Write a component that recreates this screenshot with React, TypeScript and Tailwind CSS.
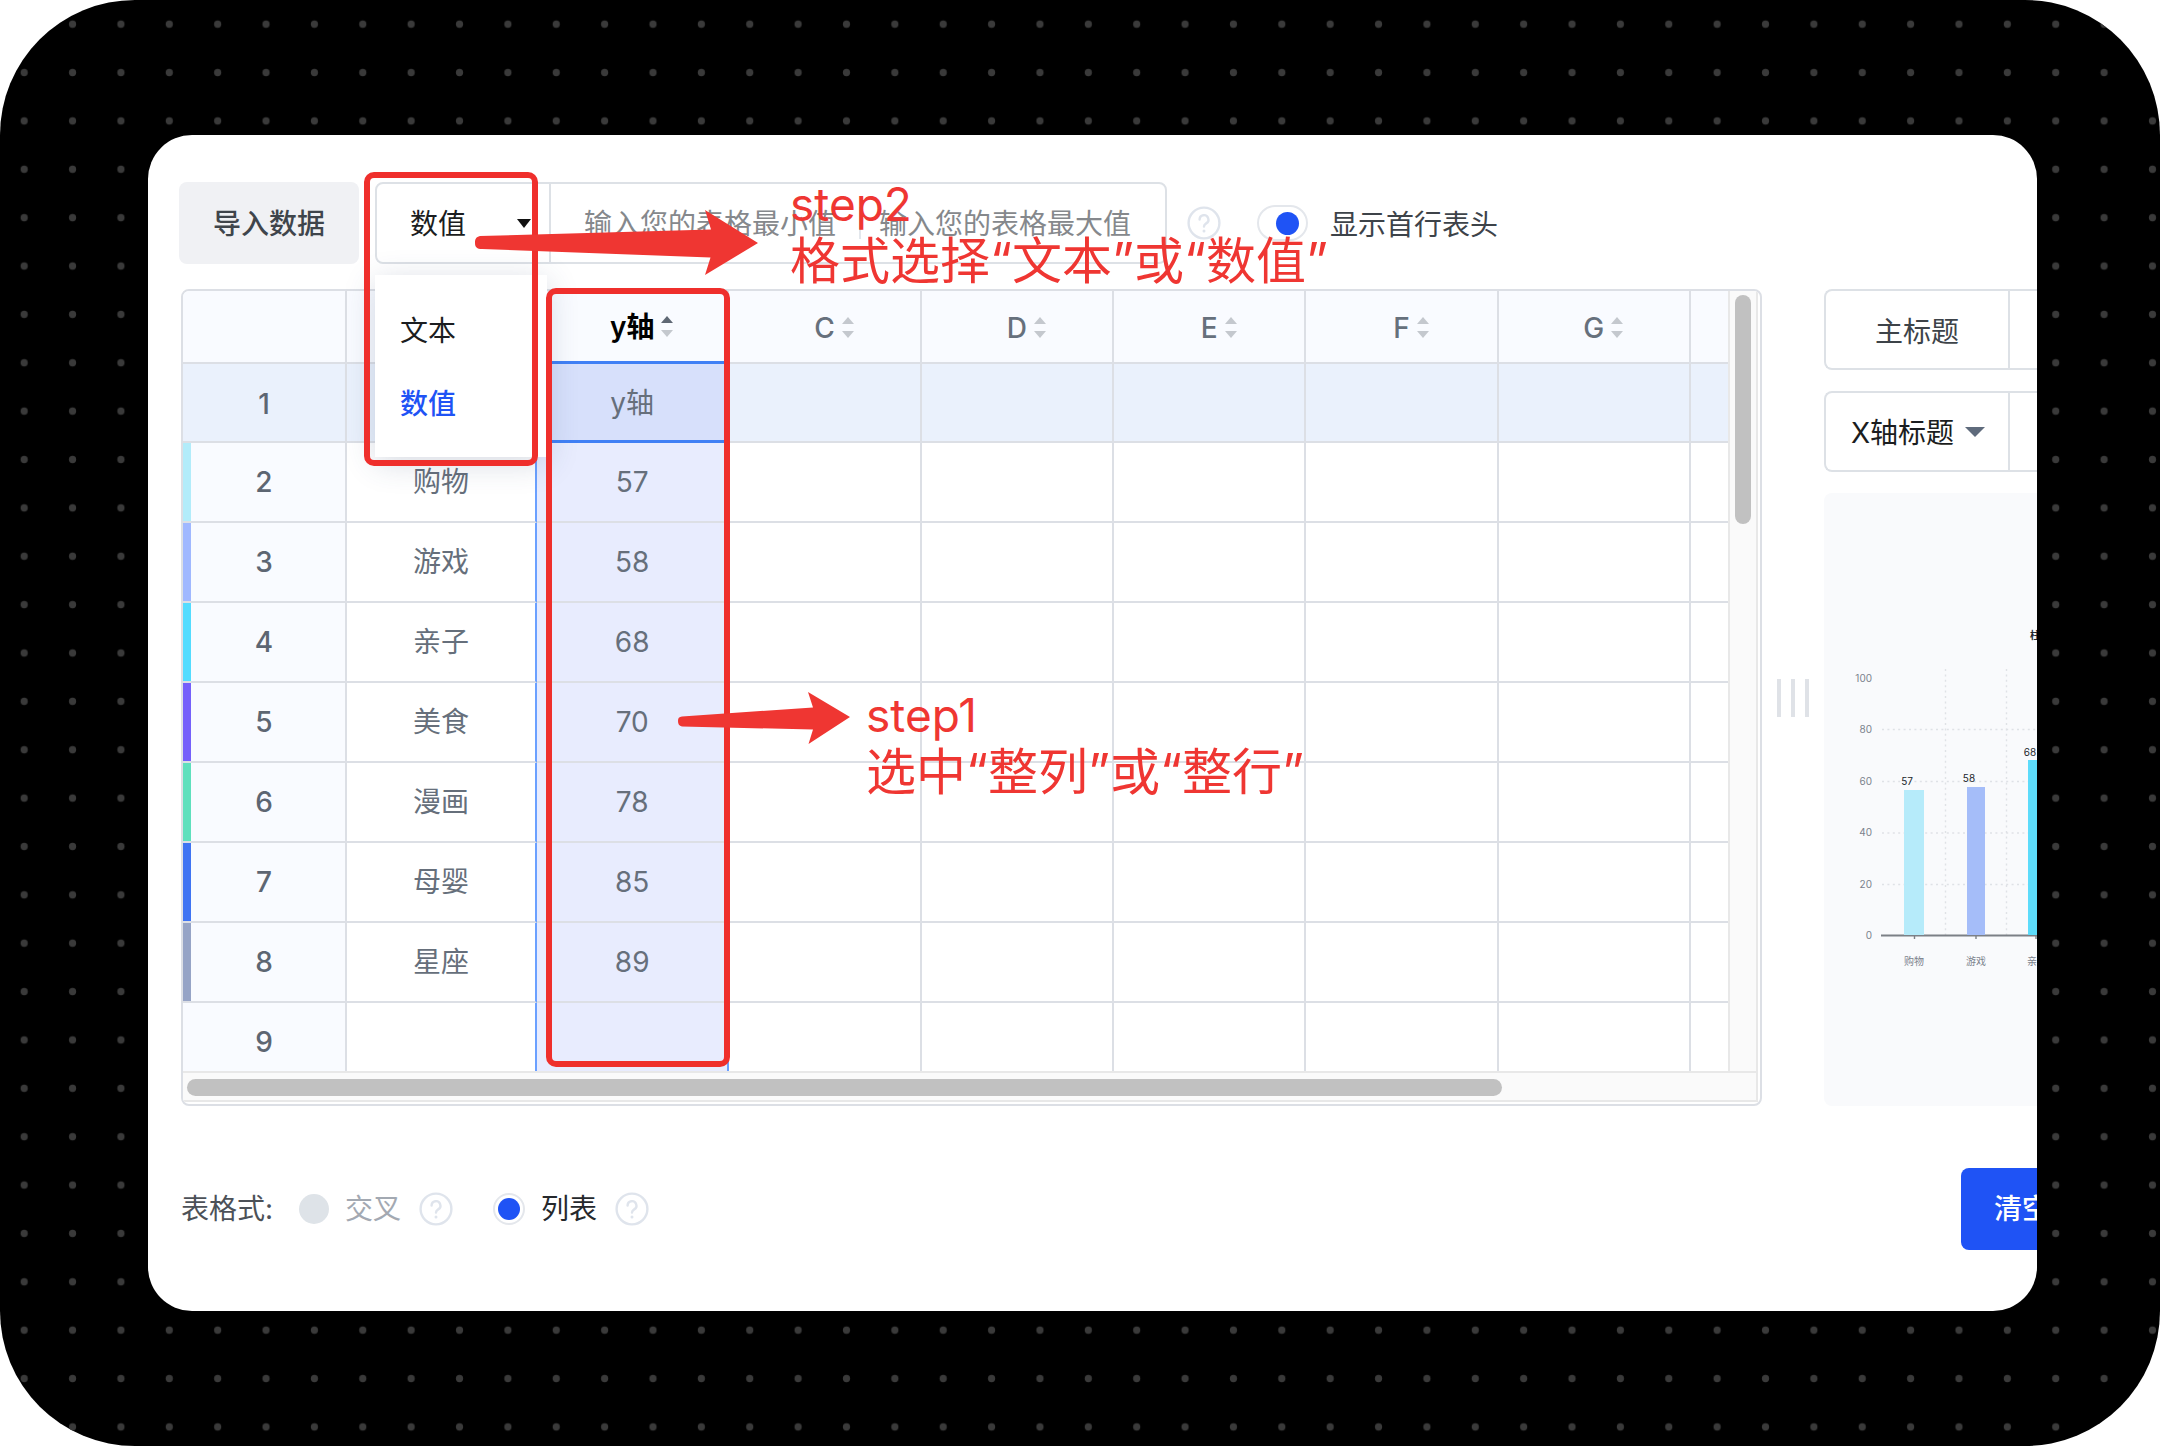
import React, { FC, ReactNode } from "react";
import clsx from "clsx";

const COLUMNS = ["C", "D", "E", "F", "G"];

const ROWS = [
  { id: 2, name: "购物", value: "57", strip: "bg-[#b2ecfa]" },
  { id: 3, name: "游戏", value: "58", strip: "bg-[#a0b8ff]" },
  { id: 4, name: "亲子", value: "68", strip: "bg-[#53dcff]" },
  { id: 5, name: "美食", value: "70", strip: "bg-[#7560fb]" },
  { id: 6, name: "漫画", value: "78", strip: "bg-[#5fe0bd]" },
  { id: 7, name: "母婴", value: "85", strip: "bg-[#3f74f3]" },
  { id: 8, name: "星座", value: "89", strip: "bg-[#96a4c6]" },
  { id: 9, name: "", value: "", strip: "" },
];

const DotGrid: FC = () => (
  <svg className="absolute inset-0 h-full w-full" aria-hidden="true">
    <defs>
      <pattern id="dots" width="48.37" height="48.37" patternUnits="userSpaceOnUse">
        <circle cx="24.2" cy="24.2" r="3.6" fill="#3a3a3a" />
      </pattern>
    </defs>
    <rect width="100%" height="100%" fill="url(#dots)" />
  </svg>
);

const HelpIcon: FC = () => (
  <svg className="h-[34px] w-[34px] shrink-0" viewBox="0 0 34 34" fill="none" stroke="#dfe4ec" strokeWidth="2.4" aria-hidden="true">
    <circle cx="17" cy="17" r="15.4" />
    <path d="M12.6 13.6a4.4 4.4 0 1 1 6.6 3.8c-1.5.9-2.2 1.6-2.2 3.2" strokeLinecap="round" />
    <circle cx="17" cy="25" r="1.5" fill="#dfe4ec" stroke="none" />
  </svg>
);

const SortIcon: FC<{ active?: boolean }> = ({ active }) => (
  <svg className="absolute left-full top-1/2 ml-[7px] h-6 w-3 -translate-y-1/2" viewBox="0 0 12 24" aria-hidden="true">
    <path d="M6 1l6 7H0z" fill={active ? "#5f6874" : "#c4c8ce"} />
    <path d="M6 22l6-7H0z" fill="#c4c8ce" />
  </svg>
);

const ColumnHead: FC<{ children: ReactNode; selected?: boolean }> = ({ children, selected }) => (
  <th
    scope="col"
    className={clsx(
      "border-r-2 border-[#dcdfe5] bg-[#f9fbff] p-0 pt-[2px] text-center",
      selected ? "border-b-[3px] border-b-[#4080f5] font-semibold text-black" : "border-b-2 font-medium text-[#66707c]"
    )}
  >
    <span className="relative inline-block">
      {children}
      <SortIcon active={selected} />
    </span>
  </th>
);

const EmptyCells: FC<{ className?: string }> = ({ className }) => (
  <>
    {COLUMNS.map((c) => (
      <td key={c} className={clsx("border-b-2 border-r-2 border-[#dcdfe5]", className)} />
    ))}
    <td className={clsx("border-b-2 border-[#dcdfe5]", className)} />
  </>
);

const Toolbar: FC = () => (
  <div className="flex items-center pl-[31px]">
    <button type="button" className="h-[82px] w-[180px] shrink-0 rounded-lg bg-[#f0f1f4] pt-[2px] font-medium text-[#3f454b]">
      导入数据
    </button>
    <div className="relative ml-4 flex h-[82px] w-[792px] shrink-0 rounded-lg border-2 border-[#dde1e6]">
      <div className="relative w-[174px] shrink-0 border-r-2 border-[#dde1e6]">
        <select aria-label="格式" defaultValue="数值" className="h-full w-full appearance-none bg-transparent pl-[33px] pt-[2px] text-[#1b1d20] outline-none">
          <option>文本</option>
          <option>数值</option>
        </select>
        <svg className="pointer-events-none absolute right-[18px] top-1/2 h-[10px] w-[14px] -translate-y-1/2" viewBox="0 0 14 10" aria-hidden="true">
          <path d="M0 1h14L7 10z" fill="#111" />
        </svg>
      </div>
      <input
        aria-label="最小值"
        placeholder="输入您的表格最小值"
        className="w-[308px] shrink-0 bg-transparent pl-[33px] pt-[2px] outline-none placeholder:text-[#85888c]"
      />
      <div className="h-8 w-[2px] shrink-0 self-center bg-[#e3e7ec]" />
      <input
        aria-label="最大值"
        placeholder="输入您的表格最大值"
        className="w-0 flex-1 bg-transparent pl-[18px] pt-[2px] outline-none placeholder:text-[#85888c]"
      />
      <ul className="absolute -left-[2px] top-[91px] z-10 w-[172px] bg-white py-[18px] shadow-[0_6px_30px_rgba(50,70,110,0.2)]">
        <li>
          <button type="button" className="h-[73px] w-full pl-[25px] pt-[2px] text-left text-[#1b1d20]">文本</button>
        </li>
        <li>
          <button type="button" className="h-[73px] w-full pl-[25px] pt-[2px] text-left font-medium text-[#1f53f5]">数值</button>
        </li>
      </ul>
    </div>
    <div className="ml-5">
      <HelpIcon />
    </div>
    <label className="ml-9 flex items-center gap-[22px] text-[#3d4349]">
      <input
        type="checkbox"
        defaultChecked
        className="flex h-9 w-[51px] appearance-none items-center justify-end rounded-full border-2 border-[#e4e7ec] pr-[7px] before:block before:h-[23px] before:w-[23px] before:rounded-full before:bg-[#1f53f5] before:content-['']"
      />
      <span className="pt-1">显示首行表头</span>
    </label>
  </div>
);

const DataTable: FC = () => (
  <div className="min-w-0 flex-1 overflow-hidden rounded-lg border-2 border-[#dcdfe5] pb-[2px] pr-[2px]">
    <div className="flex">
      <div className="h-[780px] min-w-0 flex-1 overflow-hidden">
        <table className="w-full table-fixed border-separate border-spacing-0">
          <colgroup>
            <col className="w-[164px]" />
            <col className="w-[190px]" />
            <col />
            {COLUMNS.map((c) => (
              <col key={c} />
            ))}
            <col className="w-[37px]" />
          </colgroup>
          <thead>
            <tr className="h-[73px]">
              <td className="border-b-2 border-r-2 border-[#dcdfe5] bg-[#f9fbff]" />
              <td className="border-b-2 border-r-2 border-[#dcdfe5] bg-[#f9fbff]" />
              <ColumnHead selected>y轴</ColumnHead>
              {COLUMNS.map((c) => (
                <ColumnHead key={c}>{c}</ColumnHead>
              ))}
              <td className="border-b-2 border-[#dcdfe5] bg-[#f9fbff]" />
            </tr>
          </thead>
          <tbody className="text-center text-[#666f7b]">
            <tr className="h-[79px]">
              <th scope="row" className="border-b-2 border-r-2 border-[#dcdfe5] bg-[#eaf1fc] p-0 pt-[2px] font-medium text-[#5d6672]">1</th>
              <td className="border-b-2 border-r-2 border-[#dcdfe5] bg-[#eaf1fc]" />
              <td className="border-b-[3px] border-r-2 border-b-[#4080f5] border-r-[#6aa0ff] bg-[#d7e0fb] pt-[2px]">y轴</td>
              <EmptyCells className="bg-[#eaf1fc]" />
            </tr>
            {ROWS.map((row) => (
              <tr key={row.id} className="h-20">
                <th scope="row" className="relative border-b-2 border-r-2 border-[#dcdfe5] bg-[#f9fbff] p-0 font-medium text-[#5d6672]">
                  {row.strip && <span className={clsx("absolute inset-y-0 left-0 w-2", row.strip)} />}
                  {row.id}
                </th>
                <td className="border-b-2 border-r-2 border-b-[#dcdfe5] border-r-[#6aa0ff]">{row.name}</td>
                <td className="border-b-2 border-r-2 border-b-[#dcdfe5] border-r-[#6aa0ff] bg-[#e8ecfe]">{row.value}</td>
                <EmptyCells />
              </tr>
            ))}
          </tbody>
        </table>
      </div>
      <div className="flex w-[30px] flex-col items-center border-x-2 border-[#e8e8e8] bg-[#fafafa] pt-1">
        <div className="h-[229px] w-4 rounded-full bg-[#c1c1c1]" />
      </div>
    </div>
    <div className="border-y-2 border-r-2 border-[#e8e8e8] bg-[#fafafa] px-1 pb-1 pt-[6px]">
      <div className="h-[17px] w-[84%] rounded-full bg-[#c1c1c1]" />
    </div>
  </div>
);

const ChartPreview: FC = () => (
  <svg className="block h-[613px] w-full" viewBox="0 0 213 613" preserveAspectRatio="xMinYMin slice" fontSize="10" aria-label="柱状图">
    <g stroke="#dfe2e6" strokeWidth="1.4" strokeDasharray="2 3.4">
      <path d="M121.5 176v266M182.5 176v266" />
      <path d="M58 236.500h155M58 288.500h155M58 340h155M58 391.500h155" />
    </g>
    <path d="M57 442.500h156" stroke="#7c8086" strokeWidth="1.8" />
    <path d="M90.500 443v3M152 443v3M212 443v3" stroke="#7c8086" strokeWidth="1.4" />
    <rect x="80" y="297" width="20" height="145" fill="#b6ebfa" />
    <rect x="143" y="294" width="18" height="148" fill="#a5bdf9" />
    <rect x="204" y="267" width="18" height="175" fill="#5ddcfb" />
    <g fill="#7b828c" textAnchor="end">
      <text x="48" y="189">100</text>
      <text x="48" y="240">80</text>
      <text x="48" y="292">60</text>
      <text x="48" y="343">40</text>
      <text x="48" y="395">20</text>
      <text x="48" y="446">0</text>
    </g>
    <g fill="#22262b" textAnchor="middle">
      <text x="83" y="292">57</text>
      <text x="145" y="289">58</text>
      <text x="206" y="263">68</text>
    </g>
    <g fill="#7b828c" textAnchor="middle">
      <text x="90" y="472">购物</text>
      <text x="152" y="472">游戏</text>
      <text x="213" y="472">亲子</text>
    </g>
    <text x="206" y="146" fontWeight="700" fill="#22262b">柱</text>
  </svg>
);

const SidePanel: FC = () => (
  <div className="w-[213px] shrink-0">
    <div className="flex h-[81px] rounded-l-lg border-y-2 border-l-2 border-[#dde1e6]">
      <label htmlFor="main-title" className="flex w-[184px] shrink-0 items-center justify-center border-r-2 border-[#dde1e6] pt-1 text-[#3d4349]">
        主标题
      </label>
      <input id="main-title" className="w-0 flex-1 outline-none" />
    </div>
    <div className="mt-[21px] flex h-[81px] rounded-l-lg border-y-2 border-l-2 border-[#dde1e6]">
      <div className="relative w-[184px] shrink-0 border-r-2 border-[#dde1e6]">
        <select aria-label="轴标题" className="h-full w-full appearance-none bg-transparent pl-[25px] pt-[2px] text-[#1b1d20] outline-none">
          <option>X轴标题</option>
        </select>
        <svg className="pointer-events-none absolute right-[23px] top-1/2 h-[10px] w-5 -translate-y-1/2" viewBox="0 0 20 10" aria-hidden="true">
          <path d="M0 0h20L10 10z" fill="#5f6b7c" />
        </svg>
      </div>
      <input aria-label="X轴标题" className="w-0 flex-1 outline-none" />
    </div>
    <div className="mt-[21px] overflow-hidden rounded-l-lg bg-[#f9fafc]">
      <ChartPreview />
    </div>
  </div>
);

const Footer: FC = () => (
  <div className="flex h-[82px] items-center pl-[33px]">
    <span className="text-[#4c5158]">表格式:</span>
    <label className="ml-[26px] flex items-center gap-4 text-[#a3a9b2]">
      <input type="radio" name="layout" disabled className="h-[30px] w-[30px] appearance-none rounded-full bg-[#dee3e8]" />
      交叉
    </label>
    <div className="ml-[18px]">
      <HelpIcon />
    </div>
    <label className="ml-10 flex items-center gap-4 text-[#25282c]">
      <input
        type="radio"
        name="layout"
        defaultChecked
        className="flex h-8 w-8 appearance-none items-center justify-center rounded-full border-2 border-[#e4e7ec] before:block before:h-[22px] before:w-[22px] before:rounded-full before:bg-[#1f53f5] before:content-['']"
      />
      列表
    </label>
    <div className="ml-[18px]">
      <HelpIcon />
    </div>
    <button type="button" className="ml-auto h-full w-[76px] overflow-hidden whitespace-nowrap rounded-l-lg bg-[#1f53f5] pl-[33px] text-left font-medium text-white">
      清空
    </button>
  </div>
);

// red call-outs drawn over the editor
const Annotations: FC = () => (
  <div className="pointer-events-none absolute inset-0 z-20 text-[50px] leading-[57px] text-[#ef3632]">
    <div className="absolute left-[216px] top-[37px] h-[294px] w-[174px] rounded-[10px] border-[6px] border-[#ef2f2c]" />
    <div className="absolute left-[398px] top-[153px] h-[779px] w-[184px] rounded-[10px] border-[6px] border-[#ef2f2c]" />
    <svg className="absolute left-[327px] top-[74px] h-[68px] w-[284px]" viewBox="0 0 284 68" fill="#ef3632" aria-hidden="true">
      <path d="M0 34C0 30 1 28 5 27L236 20.500L230 1L283 34L230 66L235.500 48.500L7 40C2 40 0 38 0 34z" />
    </svg>
    <svg className="absolute left-[529px] top-[556px] h-[56px] w-[174px]" viewBox="0 0 174 56" fill="#ef3632" aria-hidden="true">
      <path d="M1 30C1 27 2 26 5 25.500L136 16.500L131 1L173 26L131.500 53L136 38.500L5 35.500C2 35 1 33 1 30z" />
    </svg>
    <div className="absolute left-[642px] top-[41px] whitespace-nowrap">
      <p className="text-[46px] leading-[57px]">step2</p>
      <p>格式选择“文本”或“数值”</p>
    </div>
    <div className="absolute left-[718px] top-[552px] whitespace-nowrap">
      <p className="text-[46px] leading-[57px]">step1</p>
      <p>选中“整列”或“整行”</p>
    </div>
  </div>
);

const App: FC = () => (
  <div className="bg-white">
    <div className="relative overflow-hidden rounded-[135px] bg-black py-[135px] pl-[148px] pr-[123px] font-[Inter,'Noto_Sans_CJK_SC',sans-serif] text-[28px] leading-10">
      <DotGrid />
      <main className="relative overflow-hidden rounded-[44px] bg-white pb-[61px] pt-[47px]">
        <Toolbar />
        <div className="mt-[25px] flex items-stretch pl-[33px]">
          <DataTable />
          <div className="flex w-[62px] shrink-0 items-center justify-center gap-[10px]">
            <span className="h-[38px] w-1 bg-[#dfe2e7]" />
            <span className="h-[38px] w-1 bg-[#dfe2e7]" />
            <span className="h-[38px] w-1 bg-[#dfe2e7]" />
          </div>
          <SidePanel />
        </div>
        <div className="mt-[62px]">
          <Footer />
        </div>
        <Annotations />
      </main>
    </div>
  </div>
);

export default App;
